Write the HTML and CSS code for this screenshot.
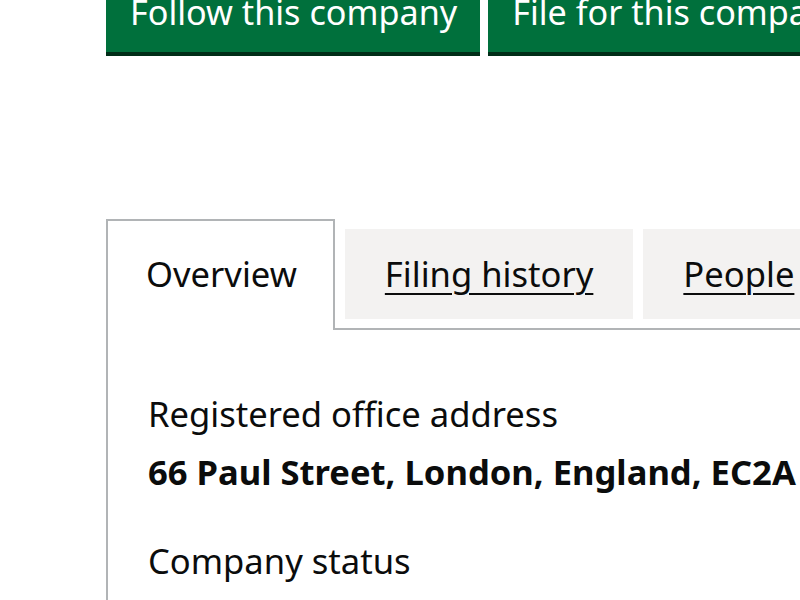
FILE: index.html
```html
<!DOCTYPE html>
<html lang="en">
<head>
<meta charset="utf-8">
<title>Company overview</title>
<link rel="stylesheet" href="styles.css">
</head>
<body>
<div class="page">
  <div class="actions">
    <a class="button" href="#">Follow this company</a>
    <a class="button" href="#">File for this company</a>
  </div>
  <div class="tabs">
    <ul class="tabs-list">
      <li class="tab tab-selected"><a class="tab-link" href="#">Overview</a></li>
      <li class="tab"><a class="tab-link" href="#">Filing history</a></li>
      <li class="tab"><a class="tab-link" href="#">People</a></li>
      <li class="tab"><a class="tab-link" href="#">More</a></li>
    </ul>
    <div class="panel">
      <dl class="summary">
        <dt class="key">Registered office address</dt>
        <dd class="value">66 Paul Street, London, England, EC2A 4NA</dd>
        <dt class="key">Company status</dt>
        <dd class="value">Active</dd>
      </dl>
    </div>
  </div>
</div>
</body>
</html>
```
FILE: styles.css
```css
html, body {
  margin: 0;
  padding: 0;
  overflow: hidden;
  background: #ffffff;
}
body {
  font-family: "Noto Sans", "Liberation Sans", sans-serif;
  font-size: 34.6px;
  line-height: 50px;
  color: #0b0c0c;
}
.page {
  width: 1600px;
  margin-left: 106px;
}
.actions {
  display: flex;
  gap: 8px;
  margin-top: -31px;
}
.button {
  display: block;
  padding: 16px 21px 13px 22px;
  border: 2px solid transparent;
  background: #00703c;
  color: #ffffff;
  font-size: 34.2px;
  text-decoration: none;
  box-shadow: 0 4px 0 #002d18;
  white-space: nowrap;
}
.tabs {
  margin-top: 167px;
}
.tabs-list {
  display: flex;
  align-items: flex-start;
  list-style: none;
  margin: 0;
  padding: 0;
}
.tab {
  flex-shrink: 0;
  margin-top: 10px;
  margin-right: 10px;
  padding: 20px 40px;
  background: #f3f2f1;
  white-space: nowrap;
}
.tab-selected {
  margin-top: 0;
  margin-bottom: -2px;
  padding: 28px 36px 31px 38px;
  border: 2px solid #b1b4b6;
  border-bottom: 0;
  background: #ffffff;
}
.tab-link {
  color: #0b0c0c;
  text-decoration: underline;
  text-decoration-thickness: 2px;
  text-underline-offset: 6px;
}
.tab-selected .tab-link {
  text-decoration: none;
}
.panel {
  border: 2px solid #b1b4b6;
  padding: 59px 40px 40px 40px;
  height: 600px;
}
.summary {
  margin: 0;
}
.key {
  margin: 0 0 8px 0;
}
.value {
  margin: 0 0 39px 0;
  font-weight: 700;
  white-space: nowrap;
}
```
